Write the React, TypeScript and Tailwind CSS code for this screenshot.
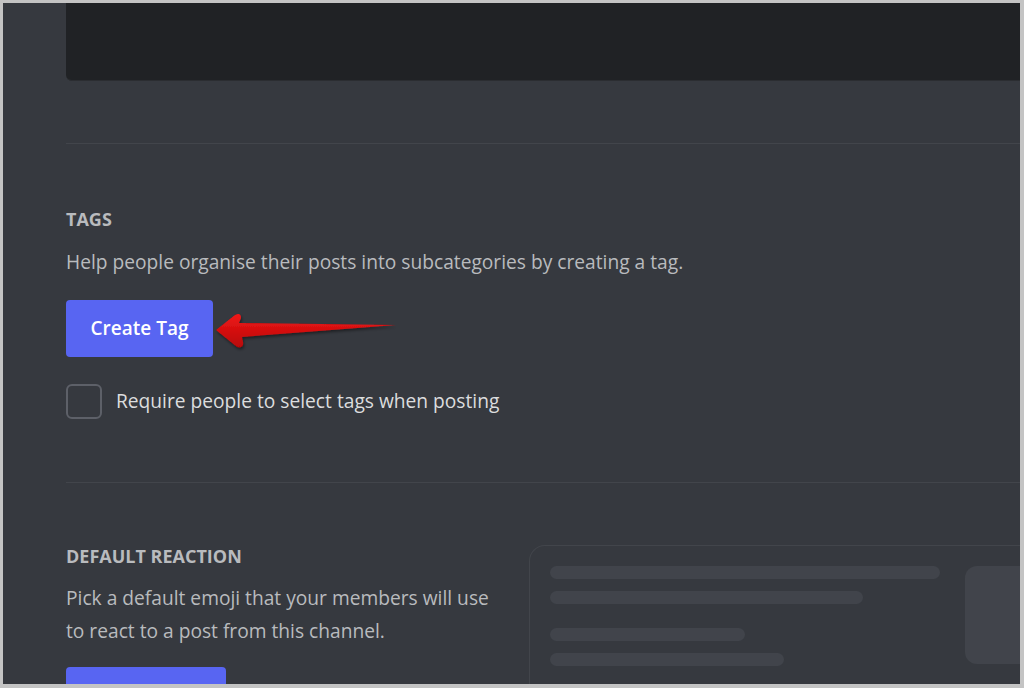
export default function App() {
  const font = { fontFamily: '"Open Sans", "Noto Sans", sans-serif' };
  return (
    <div className="w-[1024px] h-[688px] bg-[#c4c4c4] pt-[3px] pl-[3px] pr-[4px] pb-[4px] overflow-hidden" style={font}>
      <div className="relative w-full h-full bg-[#36393f] overflow-hidden pl-[63px]">
        {/* top dark panel */}
        <div className="h-[78px] bg-[#202225] rounded-bl-md border-b border-[#2b2d31]" />

        <div className="mt-[62px] h-px bg-[#42454b]" />

        {/* tags */}
        <h2 className="mt-[65px] text-[18px] leading-[20px] font-bold text-[#b9bbbe]">TAGS</h2>
        <p className="mt-[21px] text-[19.2px] leading-[24px] text-[#b9bbbe] whitespace-nowrap">
          Help people organise their posts into subcategories by creating a tag.
        </p>
        <div className="relative mt-[26px] h-[57px]">
          <button className="h-[57px] w-[147px] rounded bg-[#5865f2] text-white text-[19px] font-semibold">
            Create Tag
          </button>
          <svg className="absolute left-[142px] top-[5px]" width="200" height="50" viewBox="0 0 200 50">
            <defs>
              <linearGradient id="arr" x1="0" y1="0" x2="0" y2="1">
                <stop offset="0" stopColor="#f01818" />
                <stop offset="1" stopColor="#b80606" />
              </linearGradient>
              <filter id="sh" x="-10%" y="-30%" width="130%" height="170%">
                <feDropShadow dx="1" dy="2" stdDeviation="1.5" floodColor="#000" floodOpacity="0.45" />
              </filter>
            </defs>
            <path
              d="M8 25 L27 10 Q33 7 33 13 L31 18 L188 20 L34 32 L35 37 Q36 44 29 42 Z"
              fill="url(#arr)"
              filter="url(#sh)"
            />
          </svg>
        </div>
        <label className="mt-[27px] flex items-center gap-[14px] h-[35px]">
          <span className="w-[36px] h-[35px] rounded-md border-2 border-[#5d6068]" />
          <span className="text-[19.2px] text-[#dcddde] whitespace-nowrap">Require people to select tags when posting</span>
        </label>

        <div className="mt-[63px] h-px bg-[#42454b]" />

        {/* default reaction */}
        <div className="flex">
          <div className="w-[463px] shrink-0">
            <h2 className="mt-[63px] text-[18px] leading-[20px] font-bold text-[#b9bbbe]">
              DEFAULT REACTION
            </h2>
            <p className="mt-[15px] text-[19.2px] leading-[33px] text-[#b9bbbe] w-[440px]">
              Pick a default emoji that your members will use to react to a post from this channel.
            </p>
            <div className="mt-[20px] h-[40px] w-[160px] rounded bg-[#5865f2]" />
          </div>
          <div className="mt-[62px] flex-1 h-[200px] rounded-tl-2xl border-l border-t border-[#42454b] pl-[20px] pt-[20px] flex gap-[25px]">
            <div className="w-[390px] flex flex-col">
              <div className="h-[13px] w-[390px] rounded-full bg-[#41444b]" />
              <div className="mt-[12px] h-[13px] w-[313px] rounded-full bg-[#41444b]" />
              <div className="mt-[24px] h-[13px] w-[195px] rounded-full bg-[#41444b]" />
              <div className="mt-[12px] h-[13px] w-[234px] rounded-full bg-[#41444b]" />
            </div>
            <div className="w-[100px] h-[98px] rounded-xl bg-[#41444b]" />
          </div>
        </div>
      </div>
    </div>
  );
}
